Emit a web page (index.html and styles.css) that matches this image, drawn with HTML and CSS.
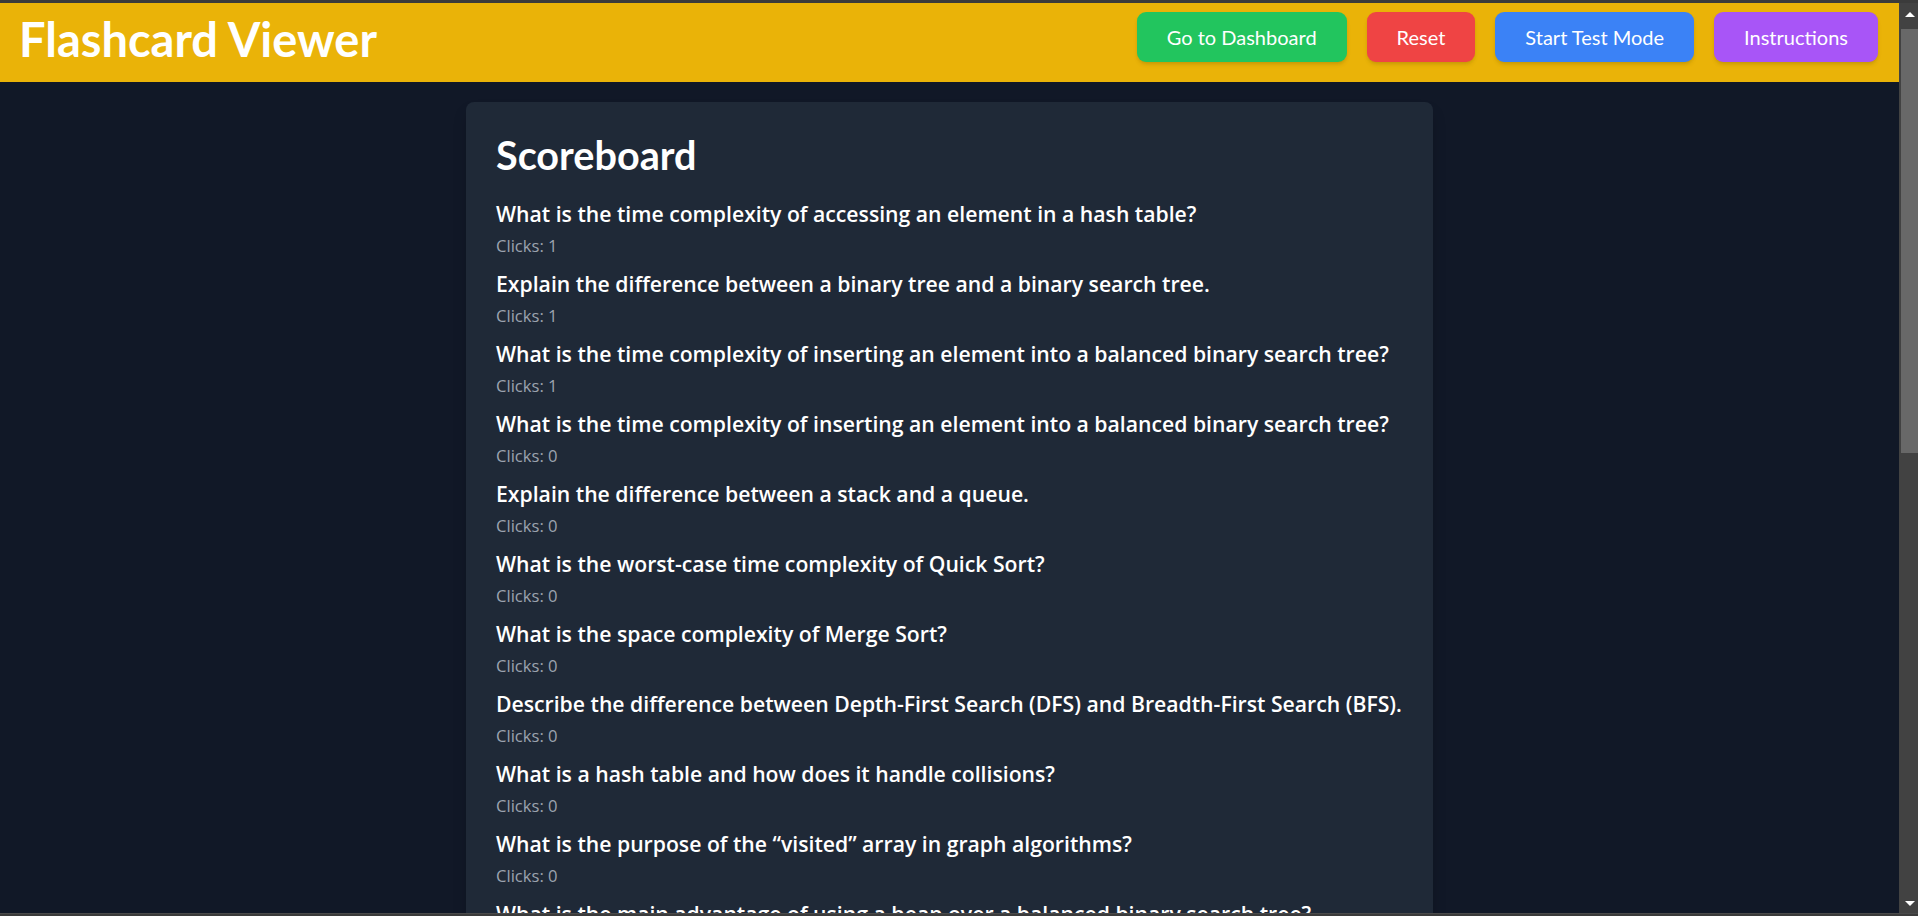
FILE: index.html
```html
<!DOCTYPE html>
<html lang="en">
<head>
<meta charset="utf-8">
<title>Flashcard Viewer</title>
<link rel="stylesheet" href="styles.css">
</head>
<body>
<div class="frame-top"></div>
<div class="window">
  <div class="page">
    <header class="topbar">
      <h1 class="brand">Flashcard Viewer</h1>
      <nav class="actions">
        <button class="btn btn-green">Go to Dashboard</button>
        <button class="btn btn-red">Reset</button>
        <button class="btn btn-blue">Start Test Mode</button>
        <button class="btn btn-purple">Instructions</button>
      </nav>
    </header>
    <main class="card">
      <h2 class="card-title">Scoreboard</h2>
      <ul class="score-list">
        <li class="score-item"><p class="question">What is the time complexity of accessing an element in a hash table?</p><p class="clicks">Clicks: 1</p></li>
        <li class="score-item"><p class="question">Explain the difference between a binary tree and a binary search tree.</p><p class="clicks">Clicks: 1</p></li>
        <li class="score-item"><p class="question">What is the time complexity of inserting an element into a balanced binary search tree?</p><p class="clicks">Clicks: 1</p></li>
        <li class="score-item"><p class="question">What is the time complexity of inserting an element into a balanced binary search tree?</p><p class="clicks">Clicks: 0</p></li>
        <li class="score-item"><p class="question">Explain the difference between a stack and a queue.</p><p class="clicks">Clicks: 0</p></li>
        <li class="score-item"><p class="question">What is the worst-case time complexity of Quick Sort?</p><p class="clicks">Clicks: 0</p></li>
        <li class="score-item"><p class="question">What is the space complexity of Merge Sort?</p><p class="clicks">Clicks: 0</p></li>
        <li class="score-item"><p class="question">Describe the difference between Depth-First Search (DFS) and Breadth-First Search (BFS).</p><p class="clicks">Clicks: 0</p></li>
        <li class="score-item"><p class="question">What is a hash table and how does it handle collisions?</p><p class="clicks">Clicks: 0</p></li>
        <li class="score-item"><p class="question">What is the purpose of the “visited” array in graph algorithms?</p><p class="clicks">Clicks: 0</p></li>
        <li class="score-item"><p class="question">What is the main advantage of using a heap over a balanced binary search tree?</p><p class="clicks">Clicks: 0</p></li>
        <li class="score-item"><p class="question">What is dynamic programming and when should it be used?</p><p class="clicks">Clicks: 0</p></li>
      </ul>
    </main>
  </div>
  <div class="scrollbar">
    <div class="sb-up"><span class="tri-up"></span></div>
    <div class="sb-thumb"></div>
    <div class="sb-track"></div>
    <div class="sb-down"><span class="tri-down"></span></div>
  </div>
</div>
<div class="frame-bottom"></div>
</body>
</html>
```
FILE: styles.css
```css
* { box-sizing: border-box; }
html, body { margin: 0; padding: 0; }
body {
  height: 916px;
  overflow: hidden;
  display: flex;
  flex-direction: column;
  background: #111827;
  font-family: "Open Sans", "Noto Sans", sans-serif;
}
.frame-top { height: 3px; background: #3b3b3b; flex: none; }
.frame-bottom { height: 3px; background: #3b3b3b; border-top: 1px solid #4a4a4a; flex: none; }
.window { flex: 1; display: flex; min-height: 0; }
.page { flex: 1; min-width: 0; overflow: hidden; background: #111827; }

/* header */
.topbar {
  height: 79px;
  background: #eab308;
  display: flex;
  justify-content: space-between;
  align-items: flex-start;
  padding: 0 21px 0 19px;
}
.brand {
  margin: 12px 0 0;
  font-family: Lato, "Open Sans", sans-serif;
  font-weight: 700;
  font-size: 47px;
  line-height: 48px;
  color: #ffffff;
}
.actions { display: flex; gap: 20px; margin-top: 9px; }
.btn {
  height: 50px;
  padding: 0 30px;
  border: none;
  border-radius: 9px;
  font-family: Lato, "Open Sans", sans-serif;
  font-size: 20px;
  font-weight: 400;
  color: #ffffff;
  box-shadow: 0 3px 5px -1px rgba(0,0,0,0.12), 0 2px 4px -2px rgba(0,0,0,0.1);
  cursor: pointer;
}
.btn-green { background: #22c55e; }
.btn-red { background: #ef4444; }
.btn-blue { background: #3b82f6; }
.btn-purple { background: #a855f7; }

/* card */
.card {
  width: 967px;
  margin: 20px auto 0;
  padding: 30px;
  background: #1f2937;
  border-radius: 8px;
  box-shadow: 0 10px 15px -3px rgba(0,0,0,0.25);
}
.card-title {
  margin: 0 0 22px;
  font-family: Lato, "Open Sans", sans-serif;
  font-weight: 700;
  font-size: 39.6px;
  line-height: 46px;
  color: #ffffff;
}
.score-list { list-style: none; margin: 0; padding: 0; }
.score-item { margin-bottom: 12px; }
.question {
  margin: 0;
  font-size: 21.2px;
  font-weight: 600;
  line-height: 28px;
  color: #ffffff;
  white-space: nowrap;
}
.clicks {
  margin: 6px 0 0;
  font-size: 16.6px;
  line-height: 24px;
  color: #9ca3af;
}

/* scrollbar */
.scrollbar {
  width: 19px;
  flex: none;
  background: #424242;
  display: flex;
  flex-direction: column;
}
.sb-up { height: 26px; display: flex; justify-content: center; padding: 9px 0 0 2px; }
.sb-down { height: 26px; display: flex; justify-content: center; padding: 14px 0 0 2px; }
.tri-up {
  width: 0; height: 0;
  border-left: 5px solid transparent;
  border-right: 5px solid transparent;
  border-bottom: 5px solid #ffffff;
}
.tri-down {
  width: 0; height: 0;
  border-left: 5px solid transparent;
  border-right: 5px solid transparent;
  border-top: 5px solid #ffffff;
}
.sb-thumb { height: 424px; margin-left: 2px; background: #686868; }
.sb-track { flex: 1; }
```
